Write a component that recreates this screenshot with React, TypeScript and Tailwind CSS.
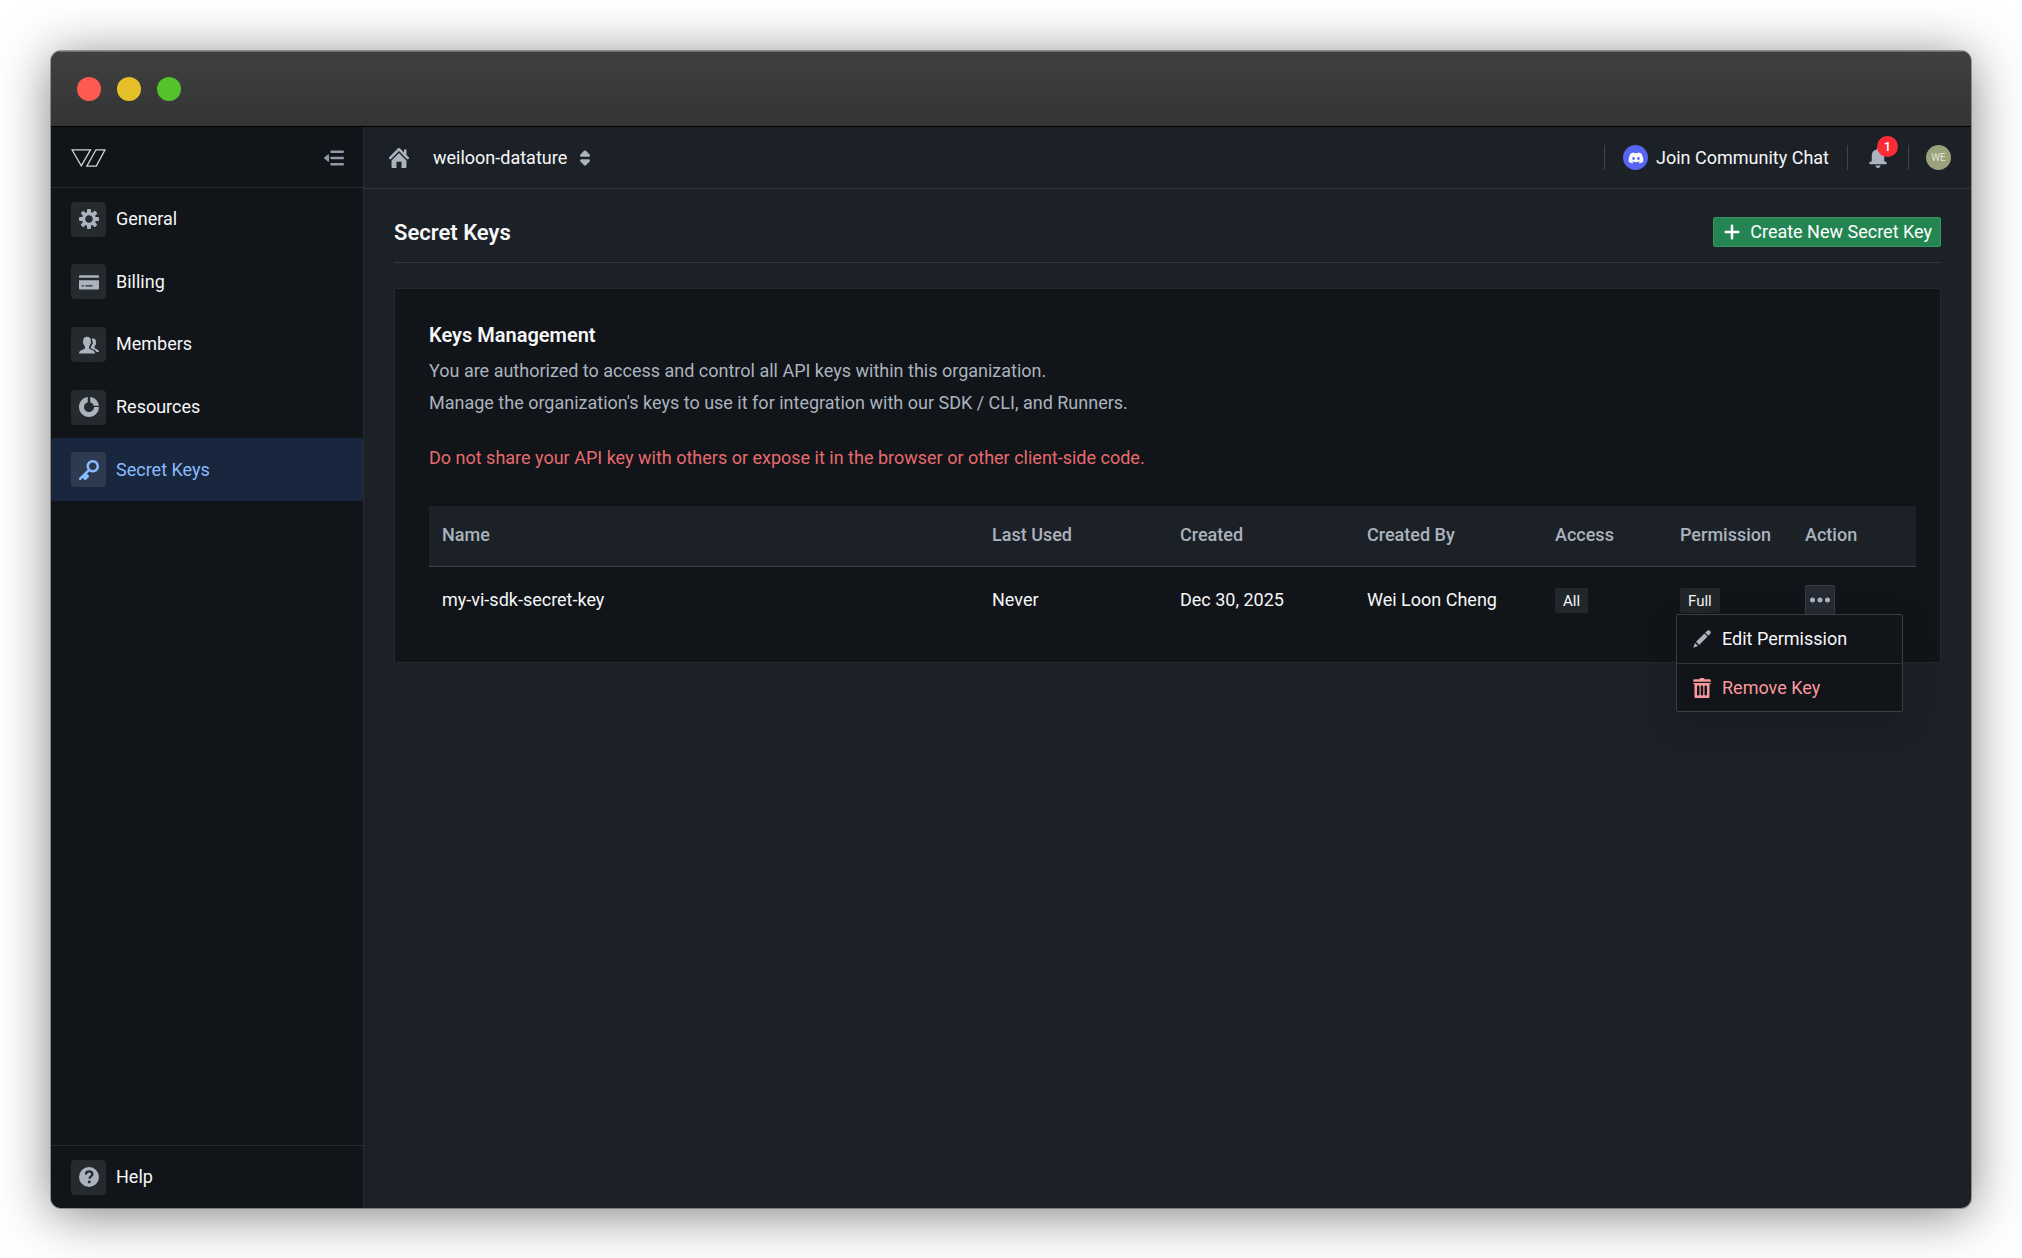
import type { ReactNode } from "react";
import { FaDiscord } from "react-icons/fa";

const ICONS = {
  cog: "M15.19 6.39h-1.85c-.11-.37-.27-.71-.45-1.04l1.36-1.36c.31-.31.31-.82 0-1.13l-1.13-1.13c-.31-.31-.82-.31-1.13 0l-1.36 1.36c-.33-.17-.67-.33-1.04-.44V.79c0-.44-.36-.8-.8-.8h-1.6c-.44 0-.8.36-.8.8v1.86c-.39.12-.75.28-1.1.47l-1.3-1.3c-.3-.3-.79-.3-1.09 0L1.82 2.91c-.3.3-.3.79 0 1.09l1.3 1.3c-.2.34-.36.7-.48 1.09H.79c-.44 0-.8.36-.8.8v1.6c0 .44.36.8.8.8h1.85c.11.37.27.71.45 1.04l-1.36 1.36c-.31.31-.31.82 0 1.13l1.13 1.13c.31.31.82.31 1.13 0l1.36-1.36c.33.18.67.33 1.04.44v1.86c0 .44.36.8.8.8h1.6c.44 0 .8-.36.8-.8v-1.86c.39-.12.75-.28 1.1-.47l1.3 1.3c.3.3.79.3 1.09 0l1.09-1.09c.3-.3.3-.79 0-1.09l-1.3-1.3c.19-.35.36-.71.48-1.1h1.85c.44 0 .8-.36.8-.8v-1.6a.816.816 0 00-.81-.79zm-7.2 4.6c-1.66 0-3-1.34-3-3s1.34-3 3-3 3 1.34 3 3-1.34 3-3 3z",
  card: "M15 2.5H1c-.55 0-1 .45-1 1v1h16v-1c0-.55-.45-1-1-1zM0 12.9c0 .55.45 1 1 1h14c.55 0 1-.45 1-1V6.5H0v6.4zm5.5-2.4h5c.28 0 .5.22.5.5s-.22.5-.5.5h-5c-.28 0-.5-.22-.5-.5s.22-.5.5-.5zm-3 0h1c.28 0 .5.22.5.5s-.22.5-.5.5h-1c-.28 0-.5-.22-.5-.5s.22-.5.5-.5z",
  people:
    "M6.4 2.1c1.9 0 3.1 1.3 3.1 3.1 0 .5 0 .9-.1 1.2.4.2.3 1.2-.3 1.5-.2.9-.6 1.5-1.1 2v1.2c.2.8 1.7 1.2 3 1.9 1.1.6 1.7 1.1 1.8 2.5H0c.1-1.4.7-1.9 1.8-2.5 1.3-.7 2.8-1.1 3-1.9V9.9c-.5-.5-.9-1.1-1.1-2-.6-.3-.7-1.3-.3-1.5-.1-.3-.1-.7-.1-1.2 0-1.8 1.2-3.1 3.1-3.1zM10 3.9c1.9-.7 3.6.2 3.6 2.2 0 .4 0 .7-.1 1 .4.2.2 1-.2 1.2-.2.7-.5 1.2-.9 1.6v1c.2.6 1.2.9 2.2 1.4.9.5 1.4 1 1.4 2.1h-2.1c-.5-1.3-1.5-1.8-2.7-2.3-1.2-.5-1.9-.8-1.9-1.2 0-.7.9-1.2 1.2-2.5.6-.6.7-1.6.3-2.2 0-.8-.2-1.6-.8-2.3z",
  donut:
    "M11.86 7h4.05C15.45 3.39 12.61.52 9 .07v4.07A4 4 0 0111.86 7zM12 8c0 2.21-1.79 4-4 4s-4-1.79-4-4c0-1.86 1.28-3.41 3-3.86V.07C3.06.56 0 3.92 0 8c0 4.42 3.58 8 8 8s8-3.58 8-8h-4z",
  key: "M11 0C8.24 0 6 2.24 6 5c0 1.02.31 1.96.83 2.75L.29 14.29a1.003 1.003 0 001.42 1.42L3 14.41l1.29 1.29c.18.19.43.3.71.3s.53-.11.71-.29l2-2a1.003 1.003 0 000-1.42L6.41 11l1.83-1.83c.8.52 1.74.83 2.76.83 2.76 0 5-2.24 5-5s-2.24-5-5-5zm0 8c-1.66 0-3-1.34-3-3s1.34-3 3-3 3 1.34 3 3-1.34 3-3 3z",
  home: "M2 10v5c0 .55.45 1 1 1h3v-5h4v5h3c.55 0 1-.45 1-1v-5L8 4l-6 6zm13.71-2.71L14 5.59V2c0-.55-.45-1-1-1s-1 .45-1 1v1.59L8.71.29C8.53.11 8.28 0 8 0s-.53.11-.71.29l-7 7a1.003 1.003 0 001.42 1.42L8 2.41l6.29 6.29c.18.19.43.3.71.3a1.003 1.003 0 00.71-1.71z",
  carets:
    "M5 7h6a1.003 1.003 0 00.71-1.71l-3-3C8.53 2.11 8.28 2 8 2s-.53.11-.71.29l-3 3A1.003 1.003 0 005 7zm6 2H5a1.003 1.003 0 00-.71 1.71l3 3c.18.18.43.29.71.29s.53-.11.71-.29l3-3A1.003 1.003 0 0011 9z",
  bell: "M8 16c1.1 0 2-.9 2-2H6c0 1.1.9 2 2 2zm6-5c-.55 0-1-.45-1-1V6c0-2.43-1.73-4.45-4.02-4.9 0-.04.02-.06.02-.1 0-.55-.45-1-1-1S7 .45 7 1c0 .04.02.06.02.1A4.992 4.992 0 003 6v4c0 .55-.45 1-1 1s-1 .45-1 1 .45 1 1 1h12c.55 0 1-.45 1-1s-.45-1-1-1z",
  plus: "M13 7H9V3c0-.55-.45-1-1-1s-1 .45-1 1v4H3c-.55 0-1 .45-1 1s.45 1 1 1h4v4c0 .55.45 1 1 1s1-.45 1-1V9h4c.55 0 1-.45 1-1s-.45-1-1-1z",
  collapse:
    "M15 7H6c-.55 0-1 .45-1 1s.45 1 1 1h9c.55 0 1-.45 1-1s-.45-1-1-1zM6 4h9c.55 0 1-.45 1-1s-.45-1-1-1H6c-.55 0-1 .45-1 1s.45 1 1 1zm9 8H6c-.55 0-1 .45-1 1s.45 1 1 1h9c.55 0 1-.45 1-1s-.45-1-1-1zM3.5 5c-.13 0-.26.05-.35.15l-3 2.5a.5.5 0 000 .7l3 2.5c.09.1.22.15.35.15.28 0 .5-.22.5-.5v-5c0-.28-.22-.5-.5-.5z",
  more: "M2 6a2 2 0 100 4 2 2 0 000-4zm6 0a2 2 0 100 4 2 2 0 000-4zm6 0a2 2 0 100 4 2 2 0 000-4z",
  pencil:
    "M3.25 10.26l2.47 2.47 6.69-6.69-2.46-2.48-6.7 6.7zM.99 14.99l3.86-1.39-2.46-2.44L.99 14.99zm12.25-14c-.48 0-.92.2-1.24.51l-1.44 1.44 2.47 2.47 1.44-1.44c.32-.32.51-.75.51-1.24.01-.95-.77-1.74-1.74-1.74z",
  trash:
    "M14.49 3.99h-13c-.28 0-.5.22-.5.5s.22.5.5.5h.5v10c0 .55.45 1 1 1h10c.55 0 1-.45 1-1v-10h.5c.28 0 .5-.22.5-.5s-.22-.5-.5-.5zm-8.5 9c0 .55-.45 1-1 1s-1-.45-1-1v-6c0-.55.45-1 1-1s1 .45 1 1v6zm3 0c0 .55-.45 1-1 1s-1-.45-1-1v-6c0-.55.45-1 1-1s1 .45 1 1v6zm3 0c0 .55-.45 1-1 1s-1-.45-1-1v-6c0-.55.45-1 1-1s1 .45 1 1v6zm2-12h-4c0-.55-.45-1-1-1h-2c-.55 0-1 .45-1 1h-4c-.55 0-1 .45-1 1v1h14v-1c0-.55-.45-1-1-1z",
};

function Icon({ name, className = "" }: { name: keyof typeof ICONS; className?: string }) {
  return (
    <svg viewBox="0 0 16 16" className={`size-5 shrink-0 fill-current ${className}`} aria-hidden="true">
      <path fillRule="evenodd" d={ICONS[name]} />
    </svg>
  );
}

function HelpIcon() {
  return (
    <svg viewBox="0 0 16 16" className="size-5" aria-hidden="true">
      <circle cx="8" cy="8" r="8" fill="currentColor" />
      <path d="M5.5 6c0-1.7 1.1-2.6 2.6-2.6s2.6.9 2.6 2.2c0 1.9-2.3 1.9-2.3 3.8" fill="none" stroke="#252a2e" strokeWidth="1.8" />
      <circle cx="8.2" cy="12" r="1.15" fill="#252a2e" />
    </svg>
  );
}

function Logo() {
  return (
    <svg viewBox="0 0 35 18" className="h-[18px] w-[35px]" fill="none" stroke="#d3d5d8" strokeWidth="1.3" aria-label="Datature">
      <path d="M1 .8h18.5L10.300 16.800z" />
      <path d="M25 .8h9L25.300 17.100h-9.500z" />
    </svg>
  );
}

function NavItem({ icon, label, active = false }: { icon: ReactNode; label: string; active?: boolean }) {
  return (
    <a
      href="#"
      aria-current={active ? "page" : undefined}
      className={`flex flex-1 items-center gap-2.5 rounded-xs px-5 ${active ? "bg-[#18273d] text-[#8abbff]" : "text-[#f6f7f9]"}`}
    >
      <span
        className={`flex size-[35px] items-center justify-center rounded ${active ? "bg-[#2d3a50] text-[#8abbff]" : "bg-[#252a2e] text-[#abb3bf]"}`}
      >
        {icon}
      </span>
      <span>{label}</span>
    </a>
  );
}

function Sidebar() {
  return (
    <aside className="flex w-[313px] shrink-0 flex-col border-r border-[#292d31] bg-[#111418]">
      <div className="flex h-[61px] items-center justify-between border-b border-[#292d31] pt-0.5 pr-[19px] pl-5">
        <Logo />
        <button type="button" aria-label="Collapse sidebar" className="text-[#8f99a8]">
          <Icon name="collapse" />
        </button>
      </div>
      <nav className="flex h-[313px] flex-col">
        <NavItem icon={<Icon name="cog" />} label="General" />
        <NavItem icon={<Icon name="card" />} label="Billing" />
        <NavItem icon={<Icon name="people" />} label="Members" />
        <NavItem icon={<Icon name="donut" />} label="Resources" />
        <NavItem icon={<Icon name="key" />} label="Secret Keys" active />
      </nav>
      <div className="mt-auto flex h-[63px] border-t border-[#292d31]">
        <NavItem icon={<HelpIcon />} label="Help" />
      </div>
    </aside>
  );
}

function Divider() {
  return <span className="h-[25px] w-px bg-[#404449]" />;
}

function TopBar() {
  return (
    <header className="flex h-[62px] items-center justify-between border-b border-[#33373b] pr-5 pl-[25px]">
      <div className="flex items-center gap-6">
        <a href="#" aria-label="Home" className="text-[#abb3bf]">
          <Icon name="home" />
        </a>
        <button type="button" className="flex items-center gap-2">
          <span>weiloon-datature</span>
          <Icon name="carets" className="text-[#abb3bf]" />
        </button>
      </div>
      <div className="flex items-center">
        <Divider />
        <a href="#" className="mr-[18px] ml-[18px] flex items-center gap-2">
          <span className="flex size-[25px] items-center justify-center rounded-full bg-[#5865f2]">
            <FaDiscord className="size-4" />
          </span>
          <span>Join Community Chat</span>
        </a>
        <Divider />
        <button type="button" aria-label="Notifications" className="relative mx-5 text-[#abb3bf]">
          <Icon name="bell" />
          <span className="absolute -top-3 -right-2.5 flex size-[21px] items-center justify-center rounded-full bg-[#fb2c36] text-[13px] leading-none font-medium text-white">
            1
          </span>
        </button>
        <Divider />
        <button
          type="button"
          aria-label="Account"
          className="ml-[17px] flex size-[25px] items-center justify-center rounded-full bg-[#9ba17b] text-[10px] text-[#e3e5da]"
        >
          WE
        </button>
      </div>
    </header>
  );
}

function Tag({ children }: { children: ReactNode }) {
  return <span className="inline-flex h-[25px] items-center rounded-xs bg-[#22272b] px-2 text-[15px]">{children}</span>;
}

function ActionMenu() {
  return (
    <div className="relative w-[30px]">
      <button
        type="button"
        aria-label="Key actions"
        aria-expanded="true"
        className="flex size-[30px] items-center justify-center rounded-xs border border-[#383d45] bg-[#252a33] text-[#abb3bf]"
      >
        <Icon name="more" />
      </button>
      <div
        role="menu"
        className="absolute top-[29px] -right-[68px] w-[227px] rounded-xs border border-[#3b3f43] bg-[#111418] shadow-[0_10px_30px_rgba(17,20,24,0.4)]"
      >
        <button type="button" role="menuitem" className="flex h-12 w-full items-center gap-2.5 px-[15px]">
          <Icon name="pencil" className="text-[#abb3bf]" />
          <span>Edit Permission</span>
        </button>
        <button type="button" role="menuitem" className="flex h-12 w-full items-center gap-2.5 border-t border-[#303438] px-[15px] text-[#fa999c]">
          <Icon name="trash" />
          <span>Remove Key</span>
        </button>
      </div>
    </div>
  );
}

const COLUMNS = ["Name", "Last Used", "Created", "Created By", "Access", "Permission", "Action"];

function KeysTable() {
  return (
    <table className="w-full table-fixed text-left">
      <colgroup>
        <col />
        <col className="w-[188px]" />
        <col className="w-[187px]" />
        <col className="w-[188px]" />
        <col className="w-[125px]" />
        <col className="w-[125px]" />
        <col className="w-[124px]" />
      </colgroup>
      <thead>
        <tr className="h-[60px] border-b border-[#404448] bg-[#1c2127] text-[#abb3bf]">
          {COLUMNS.map((column) => (
            <th key={column} scope="col" className="pb-0.5 pl-[13px] font-medium">
              {column}
            </th>
          ))}
        </tr>
      </thead>
      <tbody>
        <tr className="h-[68px]">
          <td className="pl-[13px]">my-vi-sdk-secret-key</td>
          <td className="pl-[13px]">Never</td>
          <td className="pl-[13px]">Dec 30, 2025</td>
          <td className="pl-[13px]">Wei Loon Cheng</td>
          <td className="pl-[13px]">
            <Tag>All</Tag>
          </td>
          <td className="pl-[13px]">
            <Tag>Full</Tag>
          </td>
          <td className="pl-[13px]">
            <ActionMenu />
          </td>
        </tr>
      </tbody>
    </table>
  );
}

export default function App() {
  return (
    <div className="flex min-h-screen bg-white px-[51px] pt-[51px] pb-[50px] font-['Roboto',sans-serif] text-lg leading-6 text-[#f6f7f9]">
      <div className="flex flex-1 flex-col overflow-hidden rounded-[10px] bg-[#1c2127] shadow-[0_0_0_1px_rgba(0,0,0,0.3),0_6px_52px_rgba(0,0,0,0.5)]">
        <div className="flex h-[76px] items-center gap-4 border-t border-b border-t-[#6f6f6f] border-b-black bg-linear-to-b from-[#404040] to-[#343434] px-[26px]">
          <span className="size-6 rounded-full bg-[#ff5a52]" />
          <span className="size-6 rounded-full bg-[#e6c029]" />
          <span className="size-6 rounded-full bg-[#53c22b]" />
        </div>
        <div className="flex flex-1">
          <Sidebar />
          <div className="flex min-w-0 flex-1 flex-col">
            <TopBar />
            <main className="px-[30px] pt-7">
              <div className="flex items-start justify-between border-b border-[#33373b] pb-[13px]">
                <h1 className="text-[22px] leading-8 font-semibold">Secret Keys</h1>
                <button
                  type="button"
                  className="flex h-[30px] items-center gap-2 rounded-xs border border-[#399460] bg-[#238551] px-2 text-white"
                >
                  <Icon name="plus" />
                  <span>Create New Secret Key</span>
                </button>
              </div>
              <section className="mt-[25px] rounded-xs border border-[#26292d] bg-[#111418] pt-[30px] pr-6 pb-7 pl-[34px]">
                <h2 className="mb-1 text-xl leading-8 font-semibold">Keys Management</h2>
                <p className="leading-8 text-[#abb3bf]">
                  You are authorized to access and control all API keys within this organization.
                  <br />
                  Manage the organization's keys to use it for integration with our SDK / CLI, and Runners.
                </p>
                <p className="mt-[23px] mb-8 leading-8 text-[#e76a6e]">
                  Do not share your API key with others or expose it in the browser or other client-side code.
                </p>
                <KeysTable />
              </section>
            </main>
          </div>
        </div>
      </div>
    </div>
  );
}
